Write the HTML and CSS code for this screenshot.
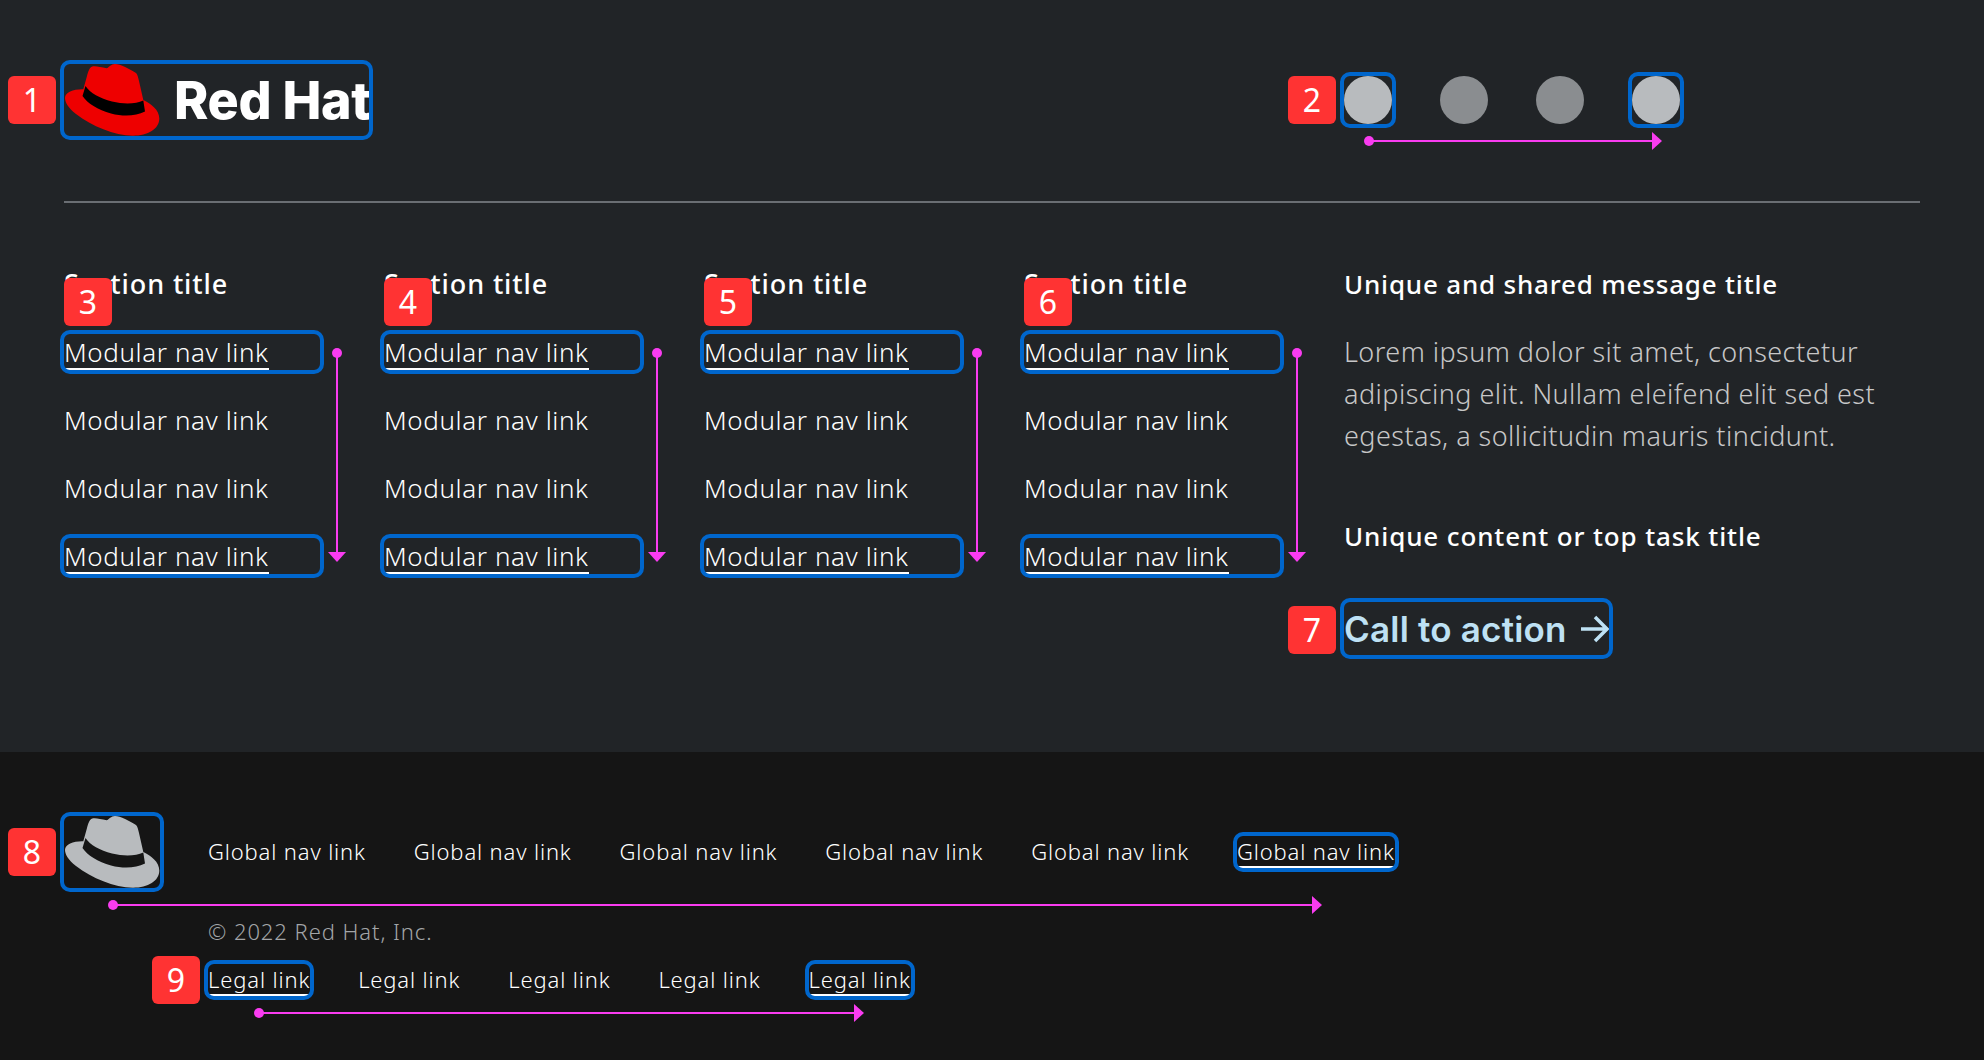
FILE: index.html
```html
<!DOCTYPE html>
<html lang="en">
  <head>
    <meta charset="UTF-8">
    <title>Footer anatomy</title>
    <link rel="stylesheet" href="styles.css">
  </head>
  <body>
    <div class="page">
      <section class="main-footer">
        <header class="brand-row">
          <a class="logo mark" href="#">
            <svg class="hat" viewBox="0 0 96 72">
              <path class="hat-red" d="M27.7 2.7C31 1.5 36 3 42.7 4.3C45 3.5 47 0 51 0C56 0 66 5 72 9C73.5 10.5 74 13 75 17L79.3 36C87 39.5 95.3 46 95.3 54.5C95.3 65 84 71.7 69 71.7C50 71.7 28 62 12 50C4 44 1 38 1 34C1 28 10 25 19.3 25.3L23 12C24 8 25.5 3.5 27.7 2.7Z"/>
              <path class="band" d="M21.5 22C26 29 36 34.3 48 37.5C60 40.5 72 40 79.3 36.5L81 47.5C72 52 60 53 47 49.5C34 46 23 39 18.5 32Z"/>
            </svg>
            <span class="logo-text">Red Hat</span>
          </a>
          <div class="socials">
            <a class="social mark" href="#"><span class="dot dot-on"></span></a>
            <a class="social" href="#"><span class="dot"></span></a>
            <a class="social" href="#"><span class="dot"></span></a>
            <a class="social mark" href="#"><span class="dot dot-on"></span></a>
          </div>
        </header>
        <hr class="divider">
        <div class="columns">
          <nav class="col">
            <h3 class="title">Section title</h3>
            <a class="nav-link mark" href="#"><span class="under">Modular nav link</span></a>
            <a class="nav-link" href="#">Modular nav link</a>
            <a class="nav-link" href="#">Modular nav link</a>
            <a class="nav-link mark" href="#"><span class="under">Modular nav link</span></a>
          </nav>
          <nav class="col">
            <h3 class="title">Section title</h3>
            <a class="nav-link mark" href="#"><span class="under">Modular nav link</span></a>
            <a class="nav-link" href="#">Modular nav link</a>
            <a class="nav-link" href="#">Modular nav link</a>
            <a class="nav-link mark" href="#"><span class="under">Modular nav link</span></a>
          </nav>
          <nav class="col">
            <h3 class="title">Section title</h3>
            <a class="nav-link mark" href="#"><span class="under">Modular nav link</span></a>
            <a class="nav-link" href="#">Modular nav link</a>
            <a class="nav-link" href="#">Modular nav link</a>
            <a class="nav-link mark" href="#"><span class="under">Modular nav link</span></a>
          </nav>
          <nav class="col">
            <h3 class="title">Section title</h3>
            <a class="nav-link mark" href="#"><span class="under">Modular nav link</span></a>
            <a class="nav-link" href="#">Modular nav link</a>
            <a class="nav-link" href="#">Modular nav link</a>
            <a class="nav-link mark" href="#"><span class="under">Modular nav link</span></a>
          </nav>
          <div class="message">
            <h3 class="title">Unique and shared message title</h3>
            <p class="lorem">Lorem ipsum dolor sit amet, consectetur adipiscing elit. Nullam eleifend elit sed est egestas, a sollicitudin mauris tincidunt.</p>
            <h3 class="title task-title">Unique content or top task title</h3>
            <a class="cta mark" href="#">
              <span>Call to action</span>
              <svg class="cta-arrow" viewBox="0 0 28 28">
                <path d="M0 14H26M14 2L26 14L14 26"/>
              </svg>
            </a>
          </div>
        </div>
      </section>

      <footer class="universal">
        <a class="small-hat mark" href="#">
          <svg class="hat" viewBox="0 0 96 72">
            <path class="hat-grey" d="M27.7 2.7C31 1.5 36 3 42.7 4.3C45 3.5 47 0 51 0C56 0 66 5 72 9C73.5 10.5 74 13 75 17L79.3 36C87 39.5 95.3 46 95.3 54.5C95.3 65 84 71.7 69 71.7C50 71.7 28 62 12 50C4 44 1 38 1 34C1 28 10 25 19.3 25.3L23 12C24 8 25.5 3.5 27.7 2.7Z"/>
            <path class="band band-dark" d="M21.5 22C26 29 36 34.3 48 37.5C60 40.5 72 40 79.3 36.5L81 47.5C72 52 60 53 47 49.5C34 46 23 39 18.5 32Z"/>
          </svg>
        </a>
        <div class="universal-body">
          <nav class="global-nav">
            <a class="small-link" href="#">Global nav link</a>
            <a class="small-link" href="#">Global nav link</a>
            <a class="small-link" href="#">Global nav link</a>
            <a class="small-link" href="#">Global nav link</a>
            <a class="small-link" href="#">Global nav link</a>
            <a class="small-link mark" href="#"><span class="under">Global nav link</span></a>
          </nav>
          <div class="copyright">© 2022 Red Hat, Inc.</div>
          <nav class="legal-nav">
            <a class="small-link mark" href="#"><span class="under">Legal link</span></a>
            <a class="small-link" href="#">Legal link</a>
            <a class="small-link" href="#">Legal link</a>
            <a class="small-link" href="#">Legal link</a>
            <a class="small-link mark" href="#"><span class="under">Legal link</span></a>
          </nav>
        </div>
      </footer>

      <!-- annotations -->
      <svg class="arrows" viewBox="0 0 1984 1060">
        <g class="arrow">
          <circle cx="1369" cy="141" r="5"/><path class="shaft" d="M1369 141H1655"/><path d="M1652 132L1662 141L1652 150Z"/>
          <circle cx="337" cy="353" r="5"/><path class="shaft" d="M337 353V555"/><path d="M328 552H346L337 562Z"/>
          <circle cx="657" cy="353" r="5"/><path class="shaft" d="M657 353V555"/><path d="M648 552H666L657 562Z"/>
          <circle cx="977" cy="353" r="5"/><path class="shaft" d="M977 353V555"/><path d="M968 552H986L977 562Z"/>
          <circle cx="1297" cy="353" r="5"/><path class="shaft" d="M1297 353V555"/><path d="M1288 552H1306L1297 562Z"/>
          <circle cx="113" cy="905" r="5"/><path class="shaft" d="M113 905H1315"/><path d="M1312 896L1322 905L1312 914Z"/>
          <circle cx="259" cy="1013" r="5"/><path class="shaft" d="M259 1013H858"/><path d="M854 1004L864 1013L854 1022Z"/>
        </g>
      </svg>
      <div class="badge b1">1</div>
      <div class="badge b2">2</div>
      <div class="badge b3">3</div>
      <div class="badge b4">4</div>
      <div class="badge b5">5</div>
      <div class="badge b6">6</div>
      <div class="badge b7">7</div>
      <div class="badge b8">8</div>
      <div class="badge b9">9</div>
    </div>
  </body>
</html>
```

FILE: styles.css
```css
body {
  margin: 0;
  background: #151515;
  color: #fff;
  font-family: "Noto Sans", Arial, sans-serif;
  font-size: 26px;
  font-weight: 350;
}
a {
  color: inherit;
  text-decoration: none;
}
.page {
  position: relative;
  width: 1984px;
  height: 1060px;
  overflow: hidden;
}
.mark {
  outline: 4px solid #06c;
  border-radius: 6px;
}
.under {
  display: inline-block;
  height: 36px;
  border-bottom: 2px solid #fff;
  box-sizing: border-box;
}

.main-footer {
  height: 752px;
  box-sizing: border-box;
  padding: 64px 64px 0;
  background: #212427;
}
.brand-row {
  display: grid;
  grid-template-columns: 1280px 1fr;
  align-items: start;
}
.logo {
  display: flex;
  align-items: center;
  gap: 14px;
  width: 305px;
  height: 72px;
}
.hat {
  display: block;
  flex: none;
  width: 96px;
  height: 72px;
}
.hat-red { fill: #e00; }
.hat-grey { fill: #b8bbbe; }
.band { fill: #000; }
.band-dark { fill: #151515; }
.logo-text {
  font-family: Inter, Arial, sans-serif;
  font-size: 52px;
  font-weight: 800;
  letter-spacing: -0.3px;
  white-space: nowrap;
}
.socials {
  display: flex;
  gap: 48px;
  padding-top: 12px;
}
.social {
  width: 48px;
  height: 48px;
}
.dot {
  display: block;
  width: 48px;
  height: 48px;
  border-radius: 50%;
  background: #8a8d90;
}
.dot-on {
  background: #b8bbbe;
}
.divider {
  height: 2px;
  margin: 65px 0 0;
  border: 0;
  background: #6a6e73;
}

.columns {
  display: grid;
  grid-template-columns: repeat(4, 320px) 1fr;
  margin-top: 63px;
}
.title {
  margin: 0;
  font-size: 26px;
  font-weight: 500;
  line-height: 36px;
  letter-spacing: 0.8px;
}
.col .title {
  margin-bottom: 32px;
  font-size: 27px;
  letter-spacing: 0.9px;
}
.nav-link {
  display: block;
  width: 256px;
  height: 36px;
  margin-bottom: 32px;
  line-height: 36px;
  letter-spacing: 0.6px;
}
.message {
  width: 556px;
}
.lorem {
  margin: 29px 0 0;
  color: #c7c7c7;
  font-size: 27px;
  line-height: 42px;
  letter-spacing: 0.45px;
}
.task-title {
  margin-top: 61px;
  letter-spacing: 0.88px;
}
.cta {
  display: flex;
  align-items: center;
  justify-content: space-between;
  width: 265px;
  height: 53px;
  margin-top: 48px;
  color: #bee1f4;
  font-family: Inter, Arial, sans-serif;
  font-size: 35px;
  font-weight: 600;
  letter-spacing: 0.2px;
  white-space: nowrap;
}
.cta-arrow {
  width: 28px;
  height: 28px;
  fill: none;
  stroke: #bee1f4;
  stroke-width: 3.5;
}

.universal {
  display: flex;
  gap: 48px;
  padding: 64px 64px 0;
}
.small-hat {
  flex: none;
  width: 96px;
  height: 72px;
}
.universal-body {
  padding-top: 20px;
  font-size: 22px;
  letter-spacing: 0.85px;
}
.global-nav,
.legal-nav {
  display: flex;
  gap: 48px;
}
.small-link {
  height: 32px;
  line-height: 30px;
  white-space: nowrap;
}
.small-link .under {
  height: 32px;
}
.copyright {
  height: 32px;
  margin-top: 48px;
  color: #a3a5a8;
  line-height: 30px;
  letter-spacing: 0.93px;
}
.legal-nav {
  margin-top: 16px;
  letter-spacing: 0.86px;
}

/* annotation layer */
.arrows {
  position: absolute;
  top: 0;
  left: 0;
  width: 1984px;
  height: 1060px;
}
.arrow {
  fill: #f93cf0;
}
.shaft {
  fill: none;
  stroke: #f93cf0;
  stroke-width: 2;
}
.badge {
  position: absolute;
  width: 48px;
  height: 48px;
  border-radius: 6px;
  background: #f33;
  font-size: 32px;
  font-weight: 400;
  line-height: 48px;
  text-align: center;
}
.b1 { left: 8px; top: 76px; }
.b2 { left: 1288px; top: 76px; }
.b3 { left: 64px; top: 278px; }
.b4 { left: 384px; top: 278px; }
.b5 { left: 704px; top: 278px; }
.b6 { left: 1024px; top: 278px; }
.b7 { left: 1288px; top: 606px; }
.b8 { left: 8px; top: 828px; }
.b9 { left: 152px; top: 956px; }
```
